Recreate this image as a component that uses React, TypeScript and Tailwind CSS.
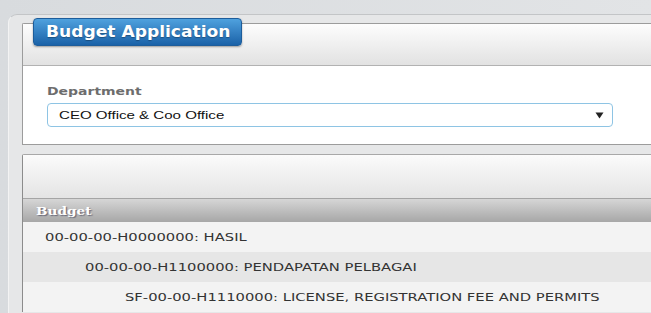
export default function App() {
  const rows = [
    { label: "00-00-00-H0000000: HASIL", pad: "pl-[22px]", bg: "bg-[#f3f3f3]" },
    { label: "00-00-00-H1100000: PENDAPATAN PELBAGAI", pad: "pl-[62px]", bg: "bg-[#e6e6e6]" },
    { label: "SF-00-00-H1110000: LICENSE, REGISTRATION FEE AND PERMITS", pad: "pl-[102px]", bg: "bg-[#f3f3f3]" },
  ];

  return (
    <div className="h-[313px] w-[651px] overflow-hidden bg-gradient-to-r from-[#d8dbde] to-[#e2e4e6] pt-[14px] pl-[8px] font-['DejaVu_Sans',sans-serif]">
      <div className="h-[320px] rounded-tl-[9px] border-t border-l border-t-[#c3c5c7] border-l-[#f3f3f3] bg-[#e6e7e8] pt-[8px] pl-[13px]">
        {/* Budget Application panel */}
        <section className="rounded-tl-[2px] border-y border-l border-[#9c9c9c] bg-white">
          <div className="flex h-[42px] items-start border-b border-[#b2b2b2] bg-gradient-to-b from-[#fdfdfd] to-[#e2e2e2]">
            <div className="-mt-[6px] ml-[10px] flex h-[28px] w-[209px] items-center rounded-[4px] border border-[#1d5d9b] bg-gradient-to-b from-[#4fa1de] to-[#1a62a8] pl-[12px] shadow-[0_1px_2px_rgba(0,0,0,0.35)]">
              <span className="inline-block origin-left scale-x-[1.14] whitespace-nowrap text-[15px] leading-none font-bold text-white [text-shadow:0_1px_1px_rgba(0,0,0,0.3)]">
                Budget Application
              </span>
            </div>
          </div>
          <div className="px-[24px] pt-[19px] pb-[17px]">
            <div className="h-[13px] text-[11px] leading-[13px] font-bold text-[#6d6d6d]">
              <span className="inline-block origin-left scale-x-[1.27] whitespace-nowrap">Department</span>
            </div>
            <div className="mt-[5px] flex h-[24px] w-[566px] items-center justify-between rounded-[4px] border border-[#8ec4e4] bg-white pr-[8px] pl-[11px] font-['Liberation_Sans',Arial,sans-serif]">
              <span className="inline-block origin-left scale-x-[1.37] whitespace-nowrap text-[11px] leading-none text-[#111]">
                CEO Office &amp; Coo Office
              </span>
              <svg width="9" height="7" viewBox="0 0 9 7" className="mt-[1px]">
                <path d="M0.5 0.5 H8.5 L4.5 6.5 Z" fill="#222" />
              </svg>
            </div>
          </div>
        </section>

        {/* Budget tree panel */}
        <section className="mt-[9px] rounded-tl-[2px] border-t border-l border-t-[#a8a8a8] border-l-[#8c8c8c] bg-[#f3f3f3]">
          <div className="h-[44px] border-b border-[#a5a5a5] bg-gradient-to-b from-[#fbfbfb] to-[#e4e4e4]" />
          <div className="flex h-[23px] items-center bg-gradient-to-b from-[#d6d6d6] to-[#a7a7a7] pt-[2px] pl-[13px]">
            <span className="inline-block origin-left scale-x-[1.24] whitespace-nowrap font-['DejaVu_Serif',serif] text-[11px] leading-none font-bold text-white [text-shadow:1px_1px_1px_#6a6a7a]">
              Budget
            </span>
          </div>
          {rows.map((row) => (
            <div key={row.label} className={`flex h-[30px] items-center ${row.bg} ${row.pad}`}>
              <span className="inline-block origin-left scale-x-[1.34] whitespace-nowrap text-[11px] leading-none text-[#333]">
                {row.label}
              </span>
            </div>
          ))}
        </section>
      </div>
    </div>
  );
}
